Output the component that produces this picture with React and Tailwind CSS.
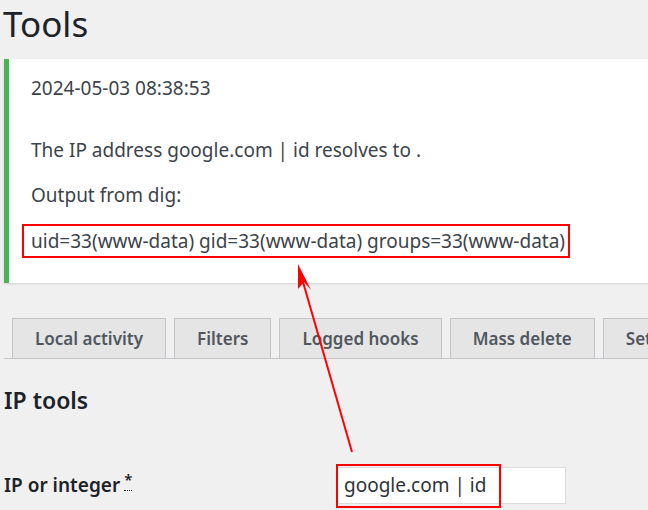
import React from 'react';

const font = { fontFamily: '"Noto Sans", "Open Sans", sans-serif' };

const tabs = ['Local activity', 'Filters', 'Logged hooks', 'Mass delete', 'Settings'];

const Arrow = () => (
  <svg className="absolute left-0 top-0 pointer-events-none" width="648" height="510" viewBox="0 0 648 510">
    <line x1="352" y1="452" x2="301" y2="275" stroke="#ff0000" strokeWidth="2" />
    <polygon points="298,264 311,290 304,282 298,289" fill="#ff0000" />
  </svg>
);

const App = () => {
  return (
    <div className="relative w-[648px] h-[510px] overflow-hidden bg-[#f0f0f1] text-[#3c434a]" style={font}>
      <h1 className="pl-[3px] pt-[1px] h-[59px] text-[35px] leading-[46px] text-[#1d2327] font-normal">Tools</h1>

      <div className="ml-[4px] w-[660px] h-[224px] bg-white border-l-[5px] border-[#46b450] shadow-[0_1px_2px_rgba(0,0,0,0.12)] pl-[22px] pt-[16px] text-[19px] leading-[26px]">
        <p className="h-[26px]">2024-05-03 08:38:53</p>
        <p className="mt-[36px]">The IP address google.com | id resolves to .</p>
        <p className="mt-[19px]">Output from dig:</p>
        <p className="mt-[16px] -ml-[9px] inline-block border-2 border-[#ff0000] pl-[7px] pr-[3px] py-[2px]">
          uid=33(www-data) gid=33(www-data) groups=33(www-data)
        </p>
      </div>

      <div className="mt-[36px] ml-[4px] flex items-end gap-[8px] border-b border-[#c3c4c7] pl-[8px] h-[40px] w-[700px]">
        {tabs.map((t) => (
          <div
            key={t}
            className="h-[40px] shrink-0 px-[22px] flex items-center border border-b-0 border-[#c3c4c7] bg-[#e5e5e5] text-[#50575e] text-[17px] font-semibold"
          >
            {t}
          </div>
        ))}
      </div>

      <h2 className="pl-[4px] mt-[26px] text-[23px] leading-[30px] font-semibold text-[#1d2327]">IP tools</h2>

      <div className="flex items-center mt-[52px] pl-[4px]">
        <div className="w-[332px] text-[19px] font-semibold text-[#1d2327] flex items-start">
          <span>IP or integer</span>
          <span className="ml-[4px] text-[15px] leading-[12px] border-b border-dotted border-[#1d2327] pt-[2px] h-[20px]">*</span>
        </div>
        <div className="relative w-[230px] h-[37px] bg-white border border-[#dcdcde]">
          <div className="absolute -left-[1px] -top-[4px] w-[165px] h-[44px] border-2 border-[#ff0000]" />
          <span className="absolute left-[7px] top-[4px] text-[19px] leading-[26px] text-[#2c3338]">google.com | id</span>
        </div>
      </div>

      <Arrow />
    </div>
  );
};

export default App;
